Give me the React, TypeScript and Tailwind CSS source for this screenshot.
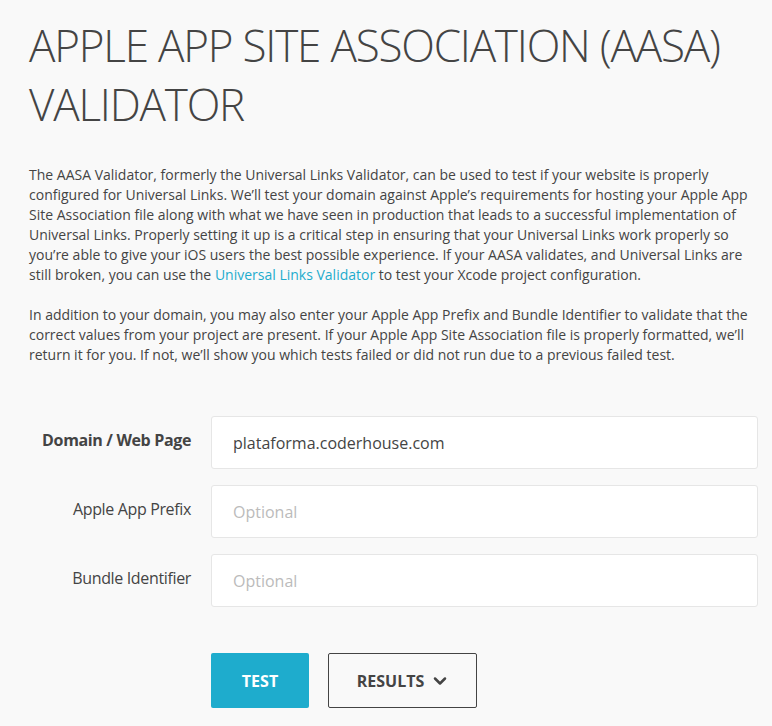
import React from "react";
import { ChevronDown } from "lucide-react";

const font = { fontFamily: '"Open Sans", "Noto Sans", sans-serif' };

function Row({ label, bold, value, placeholder }: { label: string; bold?: boolean; value?: string; placeholder?: string }) {
  return (
    <div className="flex items-start gap-[20px]">
      <label className={`w-[162px] shrink-0 text-right text-[16px] leading-[24px] pt-[12px] tracking-[-0.35px] text-[#444] ${bold ? "font-bold" : "font-normal"}`}>
        {label}
      </label>
      <input
        readOnly
        value={value ?? ""}
        placeholder={placeholder}
        className="h-[53px] flex-1 rounded-[3px] border border-[#e6e6e6] bg-white pl-[21px] text-[16px] text-[#444] outline-none placeholder:text-[#bbbbbb]"
        style={font}
      />
    </div>
  );
}

export default function App() {
  return (
    <div className="min-h-[726px] bg-[#f9f9f9] text-[#444]" style={font}>
      <div className="pl-[29px] pr-[14px] pt-[16px]">
        <h1 className="text-[44px] leading-[59px] font-light text-[#444] tracking-[-1.2px]">
          APPLE APP SITE ASSOCIATION (AASA) VALIDATOR
        </h1>
        <div className="mt-[31px] text-[14px] leading-[20px] text-[#444]">
          <p>
            The AASA Validator, formerly the Universal Links Validator, can be used to test if your website is properly
            configured for Universal Links. We’ll test your domain against Apple’s requirements for hosting your Apple App
            Site Association file along with what we have seen in production that leads to a successful implementation of
            Universal Links. Properly setting it up is a critical step in ensuring that your Universal Links work properly so
            you’re able to give your iOS users the best possible experience. If your AASA validates, and Universal Links are
            still broken, you can use the <a className="text-[#1eaccd]">Universal Links Validator</a> to test your Xcode
            project configuration.
          </p>
          <p className="mt-[20px]">
            In addition to your domain, you may also enter your Apple App Prefix and Bundle Identifier to validate that the
            correct values from your project are present. If your Apple App Site Association file is properly formatted,
            we’ll return it for you. If not, we’ll show you which tests failed or did not run due to a previous failed test.
          </p>
        </div>
        <div className="mt-[51px] flex flex-col gap-[16px]">
          <Row label="Domain / Web Page" bold value="plataforma.coderhouse.com" />
          <Row label="Apple App Prefix" placeholder="Optional" />
          <Row label="Bundle Identifier" placeholder="Optional" />
        </div>
        <div className="mt-[46px] flex gap-[19px] pl-[182px]">
          <button className="flex h-[55px] w-[98px] items-center justify-center rounded-[2px] bg-[#1eaccd] text-[16px] font-bold text-white">
            TEST
          </button>
          <button className="flex h-[55px] w-[149px] items-center justify-center gap-[6px] rounded-[2px] border border-[#444] pl-[2px] text-[16px] font-bold text-[#444]">
            RESULTS
            <ChevronDown size={20} strokeWidth={3} />
          </button>
        </div>
      </div>
    </div>
  );
}
